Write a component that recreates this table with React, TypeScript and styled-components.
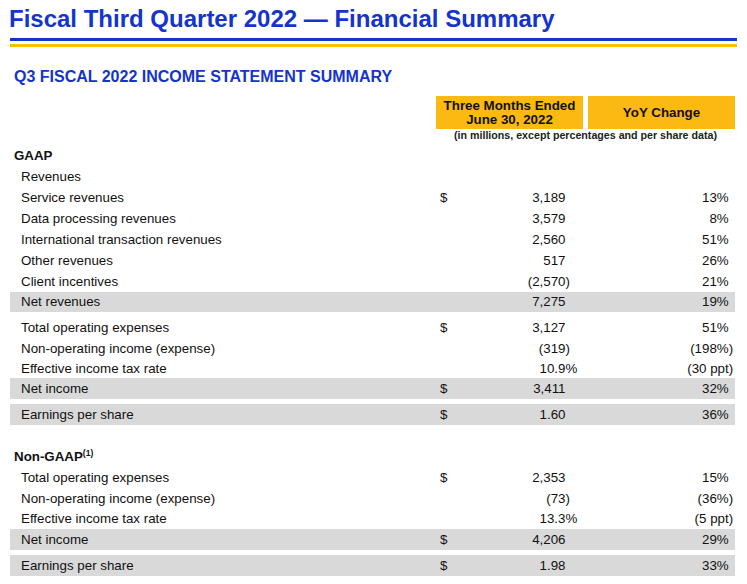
import React from 'react';
import styled, { createGlobalStyle } from 'styled-components';

const GlobalStyle = createGlobalStyle`
  html, body {
    margin: 0;
    padding: 0;
    background: #fff;
  }
  body {
    font-family: "Liberation Sans", Arial, sans-serif;
    color: #111;
  }
`;

const BLUE = '#1434CB';
const GOLD = '#FBB912';
const SHADE = '#D9D9D9';
const COLUMNS = '426px 147px 152px';

type Line = {
  label: string;
  dollar?: boolean;
  amount?: string;
  yoy?: string;
  shaded?: boolean;
  height?: number;
  after?: number;
};

type Section = {
  title: string;
  note?: string;
  lines: Line[];
};

const sections: Section[] = [
  {
    title: 'GAAP',
    lines: [
      { label: 'Revenues' },
      { label: 'Service revenues', dollar: true, amount: '3,189', yoy: '13%' },
      { label: 'Data processing revenues', amount: '3,579', yoy: '8%' },
      { label: 'International transaction revenues', amount: '2,560', yoy: '51%' },
      { label: 'Other revenues', amount: '517', yoy: '26%' },
      { label: 'Client incentives', amount: '(2,570)', yoy: '21%' },
      { label: 'Net revenues', amount: '7,275', yoy: '19%', shaded: true, height: 20, after: 5 },
      { label: 'Total operating expenses', dollar: true, amount: '3,127', yoy: '51%' },
      { label: 'Non-operating income (expense)', amount: '(319)', yoy: '(198%)' },
      { label: 'Effective income tax rate', amount: '10.9%', yoy: '(30 ppt)', height: 19.5 },
      { label: 'Net income', dollar: true, amount: '3,411', yoy: '32%', shaded: true, after: 5 },
      { label: 'Earnings per share', dollar: true, amount: '1.60', yoy: '36%', shaded: true }
    ]
  },
  {
    title: 'Non-GAAP',
    note: '(1)',
    lines: [
      { label: 'Total operating expenses', dollar: true, amount: '2,353', yoy: '15%' },
      { label: 'Non-operating income (expense)', amount: '(73)', yoy: '(36%)' },
      { label: 'Effective income tax rate', amount: '13.3%', yoy: '(5 ppt)', height: 19.5 },
      { label: 'Net income', dollar: true, amount: '4,206', yoy: '29%', shaded: true, after: 5 },
      { label: 'Earnings per share', dollar: true, amount: '1.98', yoy: '33%', shaded: true }
    ]
  }
];

const Page = styled.div`
  width: 747px;
  padding-top: 5px;
`;

const Title = styled.h1`
  margin: 0 0 0 9px;
  font-size: 24px;
  line-height: 28px;
  font-weight: bold;
  color: ${BLUE};
`;

const Rule = styled.div`
  margin: 5px 10px 0 10px;
  height: 3px;
  border-top: 3px solid ${BLUE};
  border-bottom: 3px solid #FCC200;
`;

const Subtitle = styled.h2`
  margin: 21px 0 0 14px;
  font-size: 16px;
  line-height: 18px;
  font-weight: bold;
  color: ${BLUE};
`;

const Table = styled.div`
  margin: 10px 0 0 10px;
  width: 725px;
`;

const Head = styled.div`
  display: grid;
  grid-template-columns: ${COLUMNS};
`;

const HeadBox = styled.div<{ $offset?: number }>`
  margin-left: ${(p) => p.$offset || 0}px;
  height: 33px;
  background: ${GOLD};
  display: flex;
  align-items: center;
  justify-content: center;
  text-align: center;
  font-size: 13.33px;
  line-height: 13.4px;
  font-weight: bold;
  color: #111;
`;

const Units = styled.div`
  grid-column: 2 / 4;
  text-align: center;
  font-size: 10.67px;
  line-height: 12px;
  font-weight: bold;
  color: #222;
`;

const Body = styled.div`
  margin-top: 3.5px;
`;

const Row = styled.div<{ $h: number; $shaded?: boolean; $after?: number }>`
  display: grid;
  grid-template-columns: ${COLUMNS};
  align-items: center;
  height: ${(p) => p.$h}px;
  margin-bottom: ${(p) => p.$after || 0}px;
  background: ${(p) => (p.$shaded ? SHADE : 'transparent')};
  font-size: 13.33px;
  line-height: 15px;
`;

const Label = styled.div<{ $heading?: boolean }>`
  padding-left: ${(p) => (p.$heading ? 4 : 11)}px;
  font-weight: ${(p) => (p.$heading ? 'bold' : 'normal')};
  white-space: nowrap;

  sup {
    font-size: 8.5px;
    line-height: 0;
    vertical-align: 5px;
  }
`;

const Value = styled.div`
  display: flex;
  align-items: center;
`;

const Dollar = styled.span`
  padding-left: 4px;
`;

const Amount = styled.span`
  margin-left: auto;
  padding-right: 17.5px;
  white-space: nowrap;
`;

const Change = styled.div`
  text-align: right;
  padding-right: 6.3px;
  white-space: nowrap;
`;

const Hang = styled.span`
  display: inline-block;
  width: 0;
  overflow: visible;
  white-space: nowrap;
`;

const Gap = styled.div`
  height: 21px;
`;

// trailing ")" (and "%" for amounts) sits outside the right alignment edge
const hung = (text: string, marks: string) => {
  const last = text.slice(-1);
  if (text.length > 1 && marks.includes(last)) {
    return (
      <>
        {text.slice(0, -1)}
        <Hang>{last}</Hang>
      </>
    );
  }
  return text;
};

const SectionBlock = ({ section }: { section: Section }) => (
  <>
    <Row $h={21}>
      <Label $heading>
        {section.title}
        {section.note ? <sup>{section.note}</sup> : null}
      </Label>
    </Row>
    {section.lines.map((line) => (
      <Row key={line.label} $h={line.height || 21} $shaded={line.shaded} $after={line.after}>
        <Label>{line.label}</Label>
        <Value>
          {line.dollar ? <Dollar>$</Dollar> : null}
          {line.amount ? <Amount>{hung(line.amount, ')%')}</Amount> : null}
        </Value>
        <Change>{line.yoy ? hung(line.yoy, ')') : null}</Change>
      </Row>
    ))}
  </>
);

export default function App() {
  return (
    <Page>
      <GlobalStyle />
      <Title>Fiscal Third Quarter 2022 — Financial Summary</Title>
      <Rule />
      <Subtitle>Q3 FISCAL 2022 INCOME STATEMENT SUMMARY</Subtitle>
      <Table>
        <Head>
          <div />
          <HeadBox>
            Three Months Ended
            <br />
            June 30, 2022
          </HeadBox>
          <HeadBox $offset={5}>YoY Change</HeadBox>
          <Units>(in millions, except percentages and per share data)</Units>
        </Head>
        <Body>
          <SectionBlock section={sections[0]} />
          <Gap />
          <SectionBlock section={sections[1]} />
        </Body>
      </Table>
    </Page>
  );
}
